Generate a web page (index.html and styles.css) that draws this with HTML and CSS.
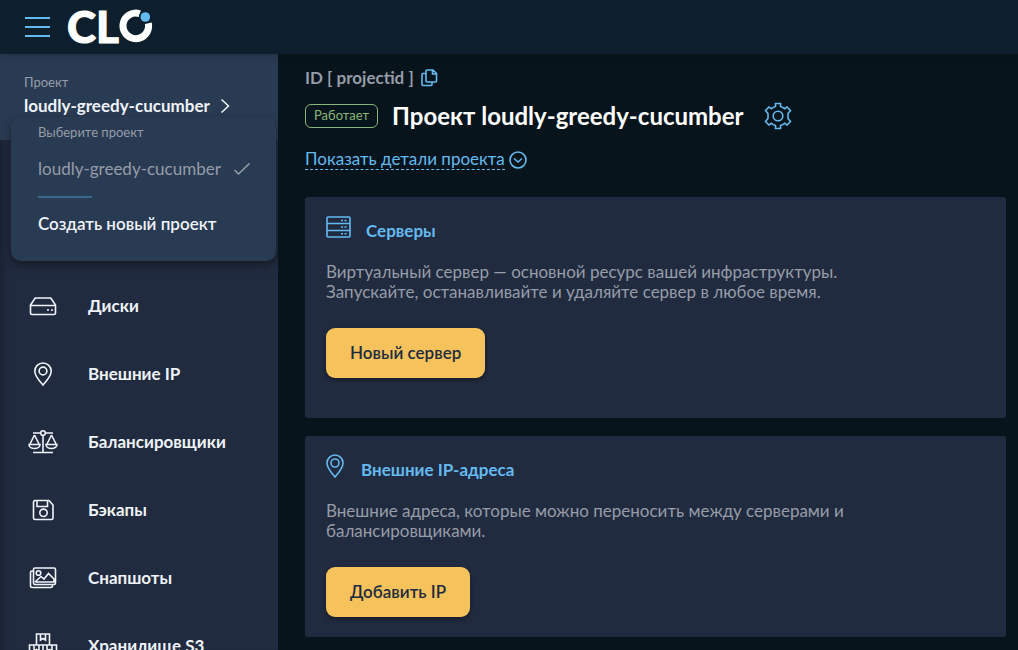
FILE: index.html
```html
<!DOCTYPE html>
<html lang="ru">
<head>
	<meta charset="utf-8">
	<meta name="viewport" content="width=device-width, initial-scale=1">
	<title>CLO</title>
	<link rel="stylesheet" href="styles.css">
</head>
<body>
	<header class="header">
		<button class="burger" type="button" aria-label="Меню">
			<span></span><span></span><span></span>
		</button>
		<a class="logo" href="#">
			<span class="logo-text">CL</span>
			<svg width="34" height="34" viewBox="0 0 34 34">
				<path d="M20.800 4.700A12.800 12.800 0 1 0 29.300 14.200" fill="none" stroke="#fff" stroke-width="7"/>
				<circle cx="26.300" cy="8" r="6.300" fill="#0d1f2c" stroke="none"/>
				<circle cx="26.300" cy="8" r="4.800" fill="#64baf0" stroke="none"/>
			</svg>
		</a>
	</header>

	<div class="layout">
		<aside class="sidebar">
			<div class="project">
				<div class="project-label">Проект</div>
				<button class="project-name" type="button">
					loudly-greedy-cucumber
					<svg width="10" height="16" viewBox="0 0 10 16"><path d="M1.500 1.500L8.500 8L1.500 14.500"/></svg>
				</button>
				<div class="dropdown">
					<div class="dropdown-title">Выберите проект</div>
					<a class="dropdown-item" href="#">
						loudly-greedy-cucumber
						<svg width="18" height="14" viewBox="0 0 18 14"><path d="M1.500 8L5.500 12L16.500 1.500"/></svg>
					</a>
					<hr>
					<a class="dropdown-new" href="#">Создать новый проект</a>
				</div>
			</div>
			<nav class="nav">
				<a href="#">
					<svg width="30" height="30" viewBox="0 0 30 30"><path d="M2.500 14L7.200 7H22.800L27.500 14V22Q27.500 23.500 26 23.500H4Q2.500 23.500 2.500 22ZM2.500 14.500H27.500M19 19H21M23 19H25"/></svg>
					Диски
				</a>
				<a href="#">
					<svg width="30" height="30" viewBox="0 0 30 30"><path d="M15 26Q6.800 17 6.800 12.200A8.200 8.200 0 0 1 23.200 12.200Q23.200 17 15 26Z"/><circle cx="15" cy="12" r="3.900"/></svg>
					Внешние IP
				</a>
				<a href="#">
					<svg width="30" height="30" viewBox="0 0 30 30"><path d="M5 6H12.500M17.500 6H25M15 8.500V25.500M5 25.500H25M6.500 8L1.500 18M6.500 8L11.500 18M1 17.500H12A5.500 4 0 0 1 1 17.500ZM23.500 8L18.500 18M23.500 8L28.500 18M18 17.500H29A5.500 4 0 0 1 18 17.500Z"/><circle cx="15" cy="6" r="2.300"/></svg>
					Балансировщики
				</a>
				<a href="#">
					<svg width="30" height="30" viewBox="0 0 30 30"><path d="M7 5.500H21L25 10V23Q25 24.500 23.500 24.500H7Q5.500 24.500 5.500 23V7Q5.500 5.500 7 5.500ZM9 5.500V11.500H19.500V5.500"/><circle cx="15.500" cy="17.800" r="3.700"/></svg>
					Бэкапы
				</a>
				<a href="#">
					<svg width="30" height="30" viewBox="0 0 30 30"><path d="M7 5H26Q27.500 5 27.500 6.500V20Q27.500 21.500 26 21.500H7Q5.500 21.500 5.500 20V6.500Q5.500 5 7 5ZM5 8H4Q2.500 8 2.500 9.500V23Q2.500 24.500 4 24.500H23Q24.500 24.500 24.500 22M7 19L13 13.500L16 16L20.500 10.500L26 16V19H7"/><circle cx="10.500" cy="10" r="2.300"/></svg>
					Снапшоты
				</a>
				<a href="#">
					<svg width="30" height="30" viewBox="0 0 30 30"><path d="M8.500 14V3H21.500V14M12.500 3V9L15 7.500L17.500 9V3M1.500 27V14H28.500V27ZM15 14V27M6 14V20L8.500 18.500L11 20V14M19 14V20L21.500 18.500L24 20V14"/></svg>
					Хранилище S3
				</a>
			</nav>
		</aside>

		<main class="content">
			<div class="project-id">
				ID [ projectid ]
				<button class="icon-button" type="button" aria-label="Скопировать">
					<svg width="18" height="18" viewBox="0 0 18 18"><path d="M7 1H13L16.500 4.500V12Q16.500 13 15.500 13H7Q6 13 6 12V2Q6 1 7 1ZM12.500 1V5H16.500M6 4.500H3Q2 4.500 2 5.500V15.500Q2 16.500 3 16.500H11Q12 16.500 12 15.500V13"/></svg>
				</button>
			</div>
			<div class="title">
				<span class="status">Работает</span>
				<h1>Проект loudly-greedy-cucumber</h1>
				<button class="icon-button" type="button" aria-label="Настройки">
					<svg width="28" height="28" viewBox="0 0 28 28"><path d="M11.500 1.500H16.500V4.500Q19 5.200 20.500 6.700L23 5L26.500 8.500L24 11.500V16.500L26.500 19.500L23 23L20.500 21.300Q19 22.800 16.500 23.500V26.500H11.500V23.500Q9 22.800 7.500 21.300L5 23L1.500 19.500L4 16.500V11.500L1.500 8.500L5 5L7.500 6.700Q9 5.200 11.500 4.500Z"/><circle cx="14" cy="14" r="4.800"/></svg>
				</button>
			</div>
			<button class="details" type="button">
				<span>Показать детали проекта</span>
				<svg width="18" height="18" viewBox="0 0 18 18"><circle cx="9" cy="9" r="8"/><path d="M5 7.500L9 11L13 7.500"/></svg>
			</button>

			<section class="card">
				<h2>
					<svg width="25" height="24" viewBox="0 0 25 24"><path d="M2 2H23Q24 2 24 3V21Q24 22 23 22H2Q1 22 1 21V3Q1 2 2 2ZM1 8.500H24M1 15.500H24M15 5.500H17M18.500 5.500H20.500M15 12H17M18.500 12H20.500M15 18.800H17M18.500 18.800H20.500"/></svg>
					<a href="#">Серверы</a>
				</h2>
				<p>Виртуальный сервер — основной ресурс вашей инфраструктуры. Запускайте, останавливайте и удаляйте сервер в любое время.</p>
				<button class="button" type="button">Новый сервер</button>
			</section>

			<section class="card">
				<h2>
					<svg width="20" height="24" viewBox="0 0 20 24"><path d="M9 23Q1 14 1 9A8 8 0 0 1 17 9Q17 14 9 23Z"/><circle cx="9" cy="9" r="4"/></svg>
					<a href="#">Внешние IP-адреса</a>
				</h2>
				<p>Внешние адреса, которые можно переносить между серверами и балансировщиками.</p>
				<button class="button" type="button">Добавить IP</button>
			</section>
		</main>
	</div>
</body>
</html>
```
FILE: styles.css
```css
* {
	box-sizing: border-box;
}
body {
	margin: 0;
	background: #08141c;
	color: #969ca8;
	font-family: Lato, "Liberation Sans", sans-serif;
	font-size: 17px;
	line-height: 20px;
}
a {
	color: inherit;
	text-decoration: none;
}
button {
	font: inherit;
	color: inherit;
	background: none;
	border: 0;
	padding: 0;
	cursor: pointer;
}
svg {
	flex: none;
	fill: none;
	stroke: currentColor;
	stroke-width: 1.6;
}

/* header */
.header {
	position: sticky;
	top: 0;
	z-index: 3;
	display: flex;
	align-items: center;
	gap: 17px;
	height: 54px;
	padding: 0 25px;
	background: #0d1f2c;
	box-shadow: 0 0 8px rgba(0, 0, 0, 0.3);
}
.burger {
	display: grid;
	gap: 7px;
	width: 25px;
}
.burger span {
	height: 2px;
	background: #64baf0;
}
.logo {
	display: flex;
	align-items: center;
	height: 34px;
	margin-bottom: 2px;
	color: #fff;
}
.logo-text {
	font-size: 44px;
	font-weight: 900;
	line-height: 34px;
	-webkit-text-stroke: 1px #fff;
}

/* layout */
.layout {
	display: grid;
	grid-template-columns: 278px 1fr;
}
.sidebar {
	position: sticky;
	top: 54px;
	height: calc(100vh - 54px);
	overflow: hidden;
	background: #212b3f;
	box-shadow: inset 12px 0 12px -12px rgba(0, 0, 0, 0.4);
	color: #f0f3fa;
}
.project {
	position: relative;
	height: 86px;
	padding: 18px 24px;
	background: #293b52;
}
.project-label,
.dropdown-title {
	color: #969ca8;
	font-size: 13px;
}
.project-name {
	display: flex;
	align-items: center;
	gap: 10px;
	height: 28px;
	font-weight: 700;
}
.project-name svg {
	stroke-width: 1.5;
}
.dropdown {
	position: absolute;
	top: 63px;
	left: 11px;
	z-index: 2;
	width: 265px;
	height: 144px;
	padding: 5px 27px;
	border-radius: 10px;
	background: #293b52;
	box-shadow: 0 4px 10px rgba(0, 0, 0, 0.4);
}
.dropdown-item {
	display: flex;
	align-items: center;
	gap: 12px;
	height: 54px;
	color: #969ca8;
	white-space: nowrap;
}
.dropdown hr {
	width: 54px;
	height: 2px;
	margin: 0;
	border: 0;
	background: #3c688c;
}
.dropdown-new {
	display: block;
	padding: 16px 0;
	font-weight: 600;
}
.nav {
	padding-top: 132px;
}
.nav a {
	display: flex;
	align-items: center;
	gap: 30px;
	height: 68px;
	padding-left: 28px;
	font-weight: 700;
}

/* content */
.content {
	padding: 14px 12px 12px 27px;
}
.project-id {
	display: flex;
	align-items: center;
	gap: 6px;
	font-weight: 700;
}
.icon-button {
	display: flex;
	color: #64baf0;
}
.title {
	display: flex;
	align-items: center;
	gap: 14px;
	margin: 12px 0 17px;
}
.status {
	height: 24px;
	padding: 0 8px;
	border: 1px solid #84b878;
	border-radius: 6px;
	color: #84b878;
	font-size: 13px;
}
h1 {
	margin: 0 6px 0 0;
	color: #fff;
	font-size: 24px;
	font-weight: 700;
	line-height: 32px;
}
.details {
	display: flex;
	align-items: center;
	gap: 4px;
	margin-bottom: 27px;
	color: #64baf0;
}
.details span {
	border-bottom: 1px dashed;
}
.card {
	min-height: 201px;
	margin-bottom: 18px;
	padding: 18px 21px 20px;
	border-radius: 3px;
	background: #212b3f;
}
.card:first-of-type {
	padding-bottom: 40px;
}
.card h2 {
	display: flex;
	gap: 15px;
	margin: 0 0 15px;
	color: #64baf0;
	font-size: 17px;
	font-weight: 700;
	line-height: 32px;
}
.card p {
	max-width: 540px;
	margin: 0 0 26px;
}
.button {
	height: 50px;
	padding: 0 24px;
	border-radius: 9px;
	background: #f5c25b;
	box-shadow: 0 2px 4px rgba(0, 0, 0, 0.4);
	color: #212b3f;
	font-weight: 600;
}
```
